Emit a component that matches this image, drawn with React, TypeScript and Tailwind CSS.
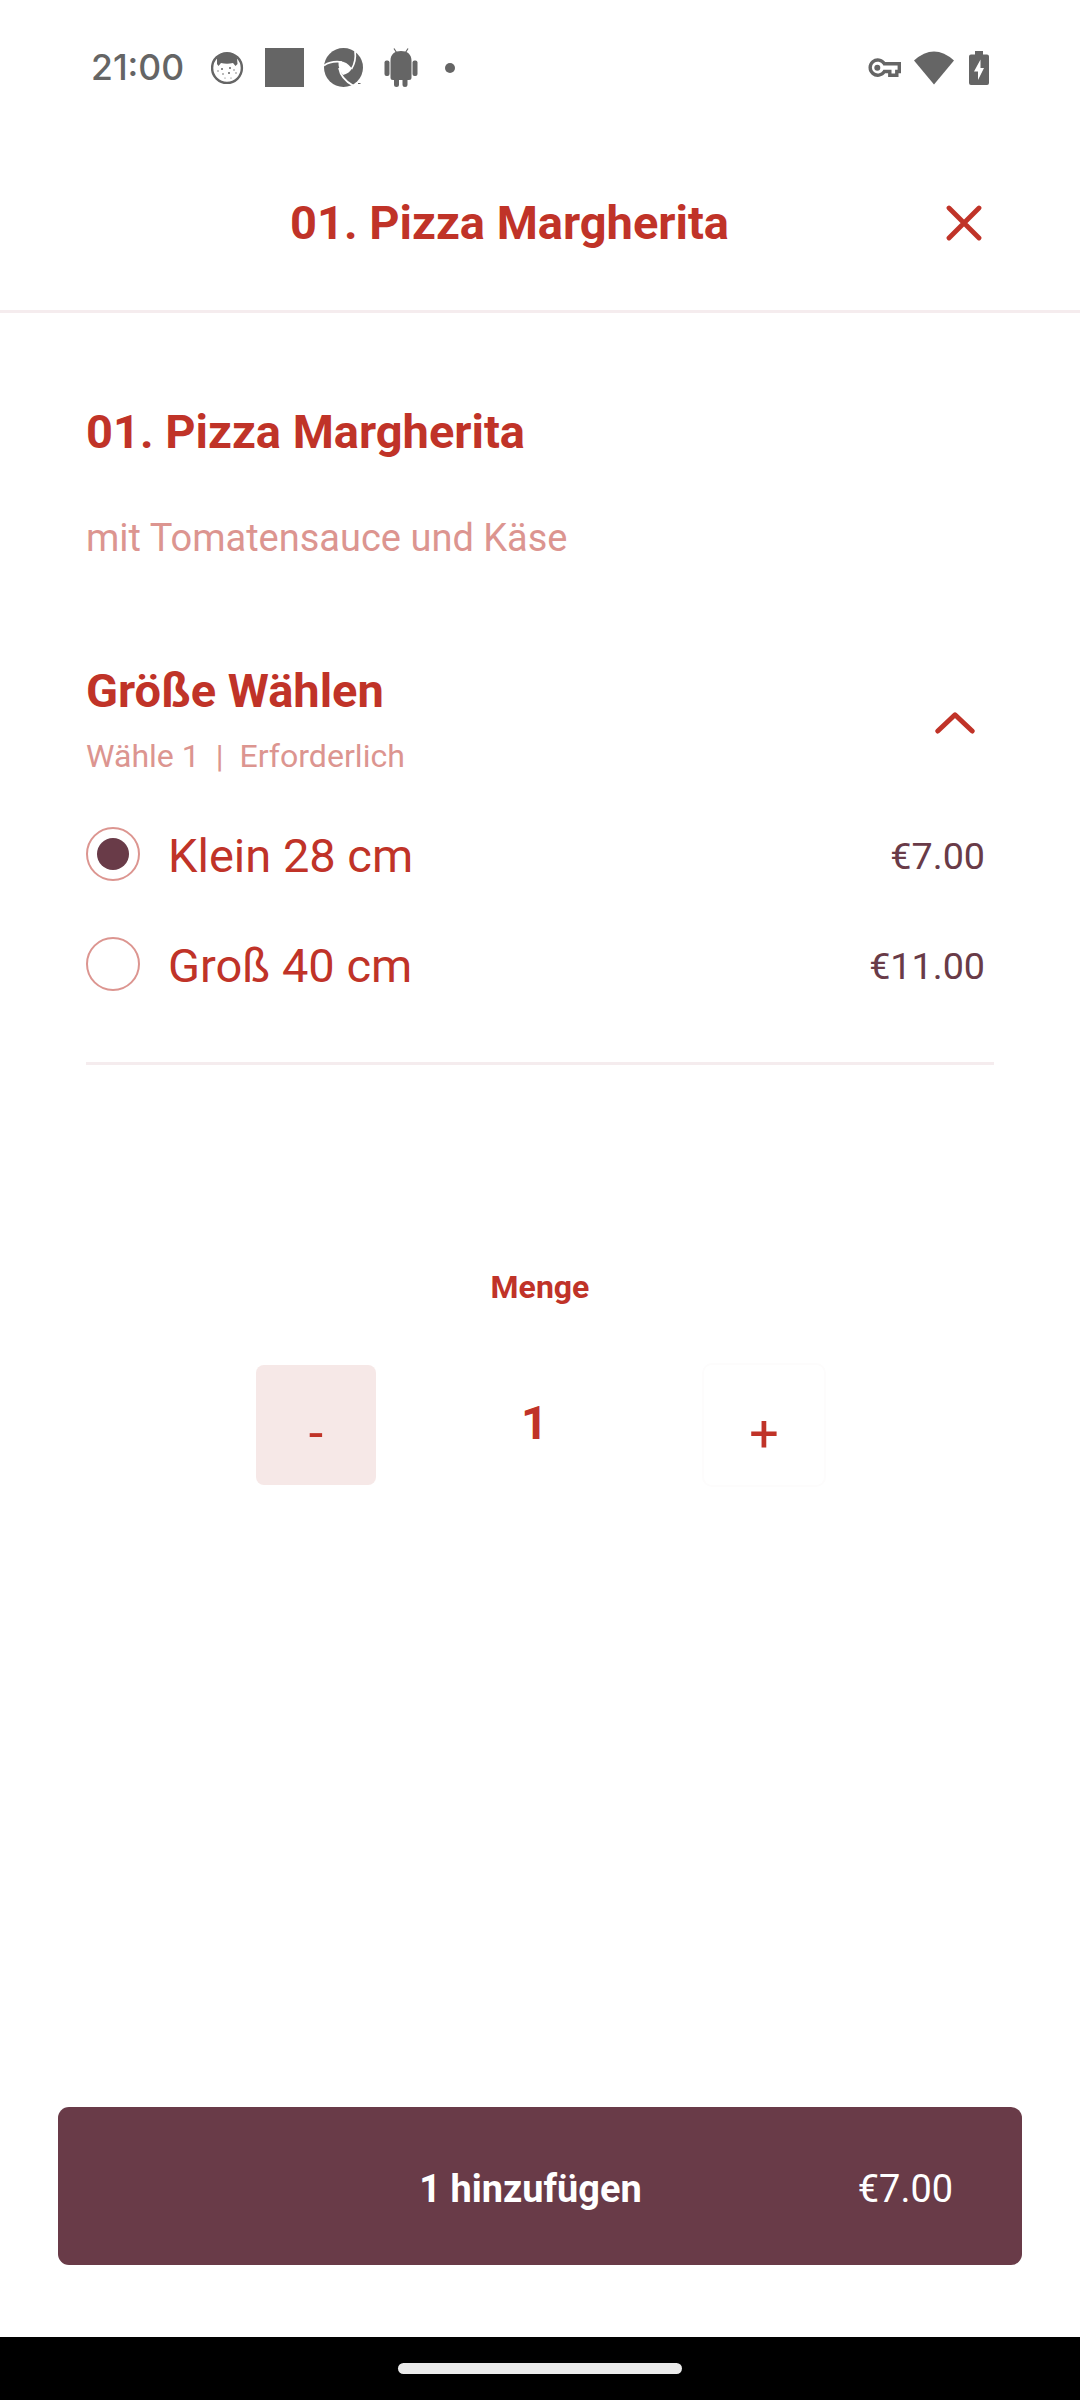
import { useState } from "react";

const sizes = [
  { id: "klein", label: "Klein 28 cm", price: 7 },
  { id: "gross", label: "Groß 40 cm", price: 11 },
];

const formatPrice = (value: number) => `€${value.toFixed(2)}`;

function StatusBar() {
  return (
    <div className="flex h-[137px] shrink-0 items-center pr-[91px] pb-[2px] pl-[91px] text-[#656565]">
      <span className="w-[120px] font-['Inter',sans-serif] text-[35.5px] leading-[40px] font-medium">21:00</span>

      {/* Notifications */}
      <svg className="block h-[34px] w-[34px] shrink-0" viewBox="0 0 34 34" fill="none">
        <circle cx="16" cy="17" r="14.900" stroke="currentColor" strokeWidth="2.400" />
        <path d="M6 7C10 1 22 1 26 7L26.500 13L24.500 15L22 12Q16 13.500 10 12L7.500 15L6 13Z" fill="currentColor" />
        <g fill="currentColor">
          <circle cx="11" cy="18" r="1" />
          <circle cx="19" cy="17" r="1" />
          <circle cx="23" cy="19" r=".7" />
          <circle cx="7" cy="20" r=".7" />
          <circle cx="12" cy="23" r=".8" />
          <circle cx="18" cy="22" r="1" />
          <circle cx="25" cy="22" r=".7" />
          <circle cx="14" cy="27" r=".6" />
          <circle cx="20" cy="27" r=".6" />
        </g>
      </svg>
      <div className="ml-5 h-[39px] w-[39px] shrink-0 bg-[#656565]" />
      <svg className="ml-5 block h-[39px] w-[39px] shrink-0" viewBox="0 0 39 39">
        <circle cx="19.500" cy="19.500" r="19.500" fill="currentColor" />
        <path d="M14.500 13.200Q22 12.500 28 20.500Q25 25.500 19 27Q14 22 14.500 13.200Z" fill="#fff" />
        <g stroke="#fff" strokeWidth="1.700" fill="none">
          <path d="M0 17.500Q7 12.500 18 14" />
          <path d="M31 3Q32.500 13 27.500 21" />
          <path d="M15 20Q17 31 29 37.500" />
        </g>
        <path d="M33 35H39V39H32Z" fill="#fff" />
        <path d="M34 35.500H36.500" stroke="currentColor" />
      </svg>
      <svg className="ml-[21px] block h-[39px] w-[34px] shrink-0" viewBox="0 0 34 39" fill="currentColor">
        <path d="M10 .5L12.500 4.500M24 .5L21.500 4.500" stroke="currentColor" strokeWidth="1.200" />
        <path d="M6.500 12.500C6.500 6 11 3 17 3S27.500 6 27.500 12.500V29.500Q27.500 32 25 32H23.500V36.500A2.500 2.500 0 0 1 18.500 36.500V32H15V36.500A2.500 2.500 0 0 1 10 36.500V32H9Q6.500 32 6.500 29.500Z" />
        <rect x="0.500" y="12.500" width="5" height="15.500" rx="2" />
        <rect x="28.500" y="12.500" width="5" height="15.500" rx="2" />
      </svg>
      <div className="ml-[27px] h-[10px] w-[10px] shrink-0 rounded-full bg-[#656565]" />

      {/* System */}
      <svg className="ml-auto block h-5 w-[34px]" viewBox="0 0 34 20" fill="none">
        <path d="M16.300 5.700H31.300V13.500H28.800V17.300H21.800V13.500H16.300A7.600 7.600 0 1 1 16.300 5.700Z" stroke="currentColor" strokeWidth="3.400" />
        <circle cx="9.300" cy="9.700" r="3" fill="currentColor" />
      </svg>
      <svg className="ml-[12px] block h-[34px] w-10" viewBox="0 0 40 34" fill="currentColor">
        <path d="M0 9.500Q20-8.500 40 9.500L20 33.500Z" />
      </svg>
      <svg className="ml-[15px] block h-[34px] w-5" viewBox="0 0 20 34">
        <path d="M6 0H14V3.500H18Q20 3.500 20 5.500V32Q20 34 18 34H2Q0 34 0 32V5.500Q0 3.500 2 3.500H6Z" fill="currentColor" />
        <path d="M11.500 8.500L5 20.500H9V29L15 17H11.500Z" fill="#fff" />
      </svg>
    </div>
  );
}

export default function App() {
  const [selected, setSelected] = useState("klein");
  const [quantity, setQuantity] = useState(1);

  const unitPrice = sizes.find((size) => size.id === selected)?.price ?? 0;

  return (
    <main className="flex h-[2400px] w-[1080px] flex-col overflow-hidden bg-white font-['Roboto',sans-serif] text-[#c03328]">
      <StatusBar />

      {/* Header */}
      <header className="flex h-[176px] shrink-0 items-center border-b-3 border-[#f5ecee] pr-[98px] pb-[2px] pl-[73px]">
        <h1 className="flex-1 text-center text-[47px] leading-[56px] font-bold">01. Pizza Margherita</h1>
        <button className="block h-[36px] w-[36px]">
          <svg viewBox="0 0 36 36" fill="none" stroke="currentColor" strokeWidth="4.800" strokeLinecap="round">
            <path d="M3 3L33 33M33 3L3 33" />
          </svg>
        </button>
      </header>

      <section className="px-[86px]">
        <h2 className="mt-[91px] text-[47px] leading-[56px] font-bold">01. Pizza Margherita</h2>
        <p className="mt-[54px] text-[38px] leading-[48px] text-[#dc9590]">mit Tomatensauce und Käse</p>

        {/* Size selection */}
        <div className="mt-[101px] flex items-center justify-between">
          <div>
            <h3 className="text-[47px] leading-[56px] font-bold">Größe Wählen</h3>
            <p className="mt-[17px] mb-[-1px] text-[32.1px] leading-[40px] whitespace-pre text-[#dc9590]">Wähle 1  |  Erforderlich</p>
          </div>
          <svg className="mt-2 mr-[19px] block h-[22px] w-10" viewBox="0 0 40 22" fill="none" stroke="currentColor" strokeWidth="5" strokeLinecap="round" strokeLinejoin="round">
            <path d="M2.800 19L20 2.800L37.200 19" />
          </svg>
        </div>

        <div className="mt-6">
          {sizes.map((size) => (
            <label key={size.id} className="flex h-[110px] items-center pr-[9px]" onClick={() => setSelected(size.id)}>
              <span className="flex h-[54px] w-[54px] items-center justify-center rounded-full border-2 border-[#dc9590]">
                {selected === size.id && <span className="h-8 w-8 rounded-full bg-[#693b48]" />}
              </span>
              <span className="ml-7 pt-1 text-[47px] leading-[56px]">{size.label}</span>
              <span className="ml-auto pt-1 text-[37.700px] leading-[48px] text-[#693b48]">{formatPrice(size.price)}</span>
            </label>
          ))}
        </div>
        <div className="mt-[43px] h-[3px] bg-[#f5ecee]" />
      </section>

      {/* Quantity */}
      <section className="mt-[202px] px-[256px]">
        <p className="text-center text-[32px] leading-[40px] font-bold">Menge</p>
        <div className="mt-[58px] flex items-center justify-between">
          <button
            onClick={() => setQuantity(Math.max(1, quantity - 1))}
            className="h-[120px] w-[120px] rounded-lg bg-[#f6e8e7] pt-[18px] text-[52px] leading-[56px]"
          >
            -
          </button>
          <span className="pr-[11px] pb-1 text-[47px] leading-[56px] font-bold">{quantity}</span>
          <button
            onClick={() => setQuantity(quantity + 1)}
            className="h-[120px] w-[120px] rounded-lg bg-white pt-[18px] text-[52px] leading-[56px] shadow-[0_0_0_2px_#fdfcfc]"
          >
            +
          </button>
        </div>
      </section>

      {/* Add to cart */}
      <button className="mx-[58px] mt-auto mb-[72px] grid h-[158px] shrink-0 grid-cols-[1fr_auto_1fr] items-center rounded-[11px] bg-[#693b48] pt-[6px] pr-[69px] pl-[50px] text-[37.900px] leading-[48px] text-white">
        <span />
        <span className="font-bold">{quantity} hinzufügen</span>
        <span className="text-right">{formatPrice(unitPrice * quantity)}</span>
      </button>

      {/* Gesture bar */}
      <div className="flex h-[63px] shrink-0 items-center justify-center bg-black">
        <div className="h-[11px] w-[284px] rounded-full bg-[#ebebeb]" />
      </div>
    </main>
  );
}
